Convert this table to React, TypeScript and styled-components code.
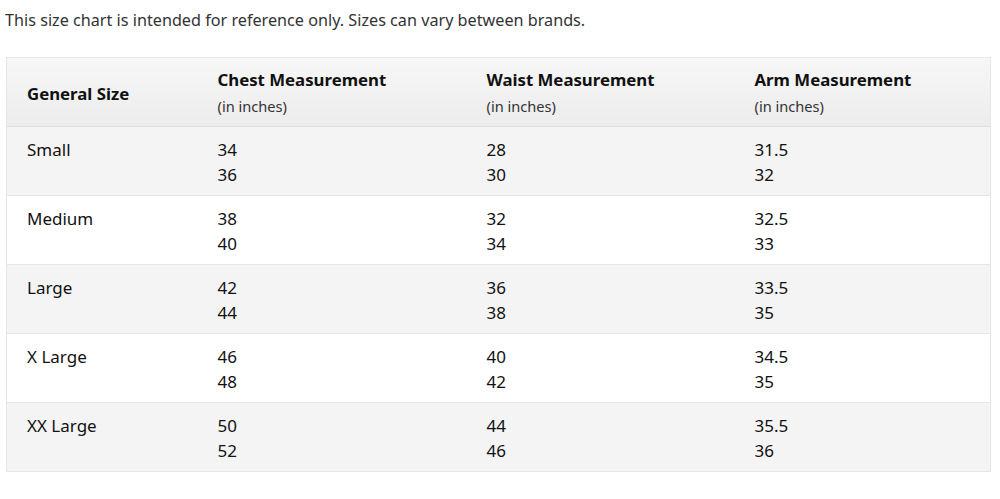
import React from "react";
import styled, { createGlobalStyle } from "styled-components";

const Global = createGlobalStyle`
  html, body { margin: 0; padding: 0; background: #ffffff; }
  body { font-family: "Noto Sans", "Open Sans", sans-serif; color: #111; }
`;

const Page = styled.div`
  width: 1000px;
  height: 499px;
  padding: 9px 10px 0 6px;
  box-sizing: border-box;
  background: #fff;
`;

const Intro = styled.p`
  margin: 0 0 0 -1px;
  font-size: 16.2px;
  line-height: 22px;
  color: #333;
`;

const Table = styled.table`
  margin-top: 26px;
  width: 984px;
  border-collapse: collapse;
  table-layout: fixed;
  border: 1px solid #e6e6e6;
`;

const HeadRow = styled.tr`
  background: linear-gradient(#f7f7f7, #ececec);
  height: 69px;
  border-bottom: 1px solid #dedede;
`;

const Th = styled.th`
  text-align: left;
  font-weight: 700;
  font-size: 16.8px;
  padding: 2px 0 0 20px;
  vertical-align: middle;
  color: #111;
`;

const ThTitle = styled.div`
  font-weight: 700;
  font-size: 16.8px;
  line-height: 20px;
`;

const ThSub = styled.div`
  font-weight: 400;
  font-size: 14.6px;
  line-height: 20px;
  margin-top: 6px;
  color: #333;
`;

const Row = styled.tr<{ $alt: boolean }>`
  background: ${(p) => (p.$alt ? "#f4f4f4" : "#ffffff")};
  height: 69px;
  border-top: 1px solid #e6e6e6;
`;

const Td = styled.td`
  padding: 10px 0 0 20px;
  vertical-align: top;
  font-size: 17px;
  line-height: 25px;
  color: #111;
`;

const Line = styled.div``;

const rows: [string, string[], string[], string[]][] = [
  ["Small", ["34", "36"], ["28", "30"], ["31.5", "32"]],
  ["Medium", ["38", "40"], ["32", "34"], ["32.5", "33"]],
  ["Large", ["42", "44"], ["36", "38"], ["33.5", "35"]],
  ["X Large", ["46", "48"], ["40", "42"], ["34.5", "35"]],
  ["XX Large", ["50", "52"], ["44", "46"], ["35.5", "36"]],
];

export default function App() {
  return (
    <Page>
      <Global />
      <Intro>This size chart is intended for reference only. Sizes can vary between brands.</Intro>
      <Table>
        <colgroup>
          <col style={{ width: 191 }} />
          <col style={{ width: 269 }} />
          <col style={{ width: 268 }} />
          <col style={{ width: 256 }} />
        </colgroup>
        <thead>
          <HeadRow>
            <Th>General Size</Th>
            <Th>
              <ThTitle>Chest Measurement</ThTitle>
              <ThSub>(in inches)</ThSub>
            </Th>
            <Th>
              <ThTitle>Waist Measurement</ThTitle>
              <ThSub>(in inches)</ThSub>
            </Th>
            <Th>
              <ThTitle>Arm Measurement</ThTitle>
              <ThSub>(in inches)</ThSub>
            </Th>
          </HeadRow>
        </thead>
        <tbody>
          {rows.map(([size, chest, waist, arm], i) => (
            <Row key={size} $alt={i % 2 === 0}>
              <Td>{size}</Td>
              <Td>{chest.map((v) => <Line key={v}>{v}</Line>)}</Td>
              <Td>{waist.map((v) => <Line key={v}>{v}</Line>)}</Td>
              <Td>{arm.map((v) => <Line key={v}>{v}</Line>)}</Td>
            </Row>
          ))}
        </tbody>
      </Table>
    </Page>
  );
}
